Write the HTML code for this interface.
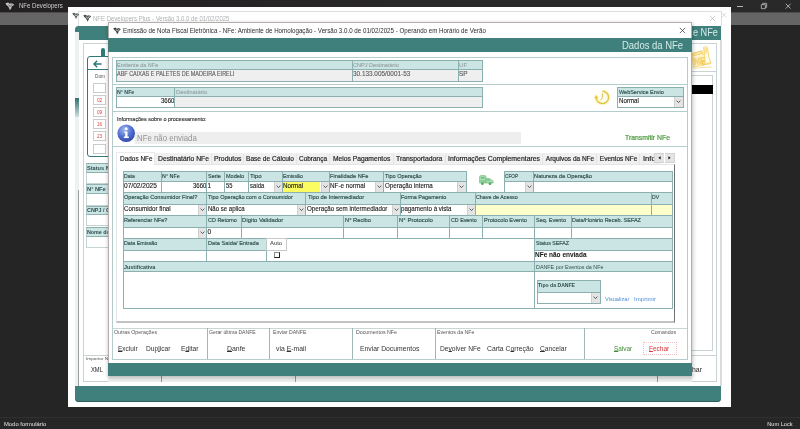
<!DOCTYPE html>
<html><head><meta charset="utf-8"><title>NFe Developers</title>
<style>
html,body{margin:0;padding:0;}
body{width:800px;height:429px;overflow:hidden;background:#252525;font-family:"Liberation Sans",sans-serif;position:relative;}
#r{position:absolute;left:0;top:0;width:800px;height:429px;overflow:hidden;will-change:transform;}
#r div{position:absolute;}
.t{position:absolute;white-space:pre;transform-origin:0 50%;display:block;}
.a{position:absolute;display:block;overflow:visible;}
u{text-decoration-thickness:0.5px;text-underline-offset:0.2px;}
</style></head><body><div id="r">
<div style="left:0.00px;top:0.00px;width:800.00px;height:12.00px;background:linear-gradient(90deg,#221f20,#2a2929 60%);"></div>
<div style="left:0.00px;top:12.00px;width:800.00px;height:12.50px;background:#656565;"></div>
<div style="left:0.00px;top:12.00px;width:800.00px;height:1.00px;background:#4c4c4c;"></div>
<div style="left:0.00px;top:416.80px;width:800.00px;height:12.20px;background:#262626;border-top:1px solid #303030;box-sizing:border-box;"></div>
<svg class="a" style="left:4.5px;top:1.5px" width="10" height="9" viewBox="0 0 10 9"><path d="M0.5 1.2 L3.2 0.6 L4.5 1.8 L6.5 1.2 L9 2.2 L8.4 3.4 L6.8 4.2 L6.2 6.4 L4.8 8.2 L4.2 6.2 L3.2 4.4 L1.4 3 Z" fill="#c2c6c6"/><path d="M3.6 2.6 L5 4.6 L7.2 2.2" fill="none" stroke="#555" stroke-width="0.9"/></svg>
<span class="t" style="left:19.20px;top:2px;font-size:6.6px;line-height:7px;height:7px;color:#cfcfcf;transform:scaleX(0.9185);">NFe Developers</span>
<div style="left:737.00px;top:5.50px;width:6.00px;height:1.00px;background:#b4b4b4;"></div>
<svg class="a" style="left:760px;top:1.8px" width="8" height="8" viewBox="0 0 9 9"><path d="M1.5 3 H6 V7.5 H1.5 Z M3 3 V1.5 H7.5 V6 H6" fill="none" stroke="#bdbdbd" stroke-width="0.9"/></svg>
<svg class="a" style="left:785px;top:3px" width="6.4" height="6.4" viewBox="0 0 8 8"><path d="M1 1 L7 7 M7 1 L1 7" fill="none" stroke="#cfcfcf" stroke-width="1"/></svg>
<span class="t" style="left:4.20px;top:421px;font-size:5.6px;line-height:6px;height:6px;color:#e6e6e6;transform:scaleX(1.0454);">Modo formulário</span>
<span class="t" style="left:767.30px;top:421px;font-size:5.6px;line-height:6px;height:6px;color:#e6e6e6;">Num Lock</span>
<div style="left:67.80px;top:7.00px;width:663.40px;height:399.70px;background:#ffffff;"></div>
<div style="left:78.00px;top:10.70px;width:644.00px;height:15.30px;background:#ffffff;border:1px solid #dcdfdf;border-bottom:none;box-sizing:border-box;"></div>
<svg class="a" style="left:72px;top:11.5px" width="8" height="8" viewBox="0 0 10 9"><path d="M0.3 1.2 L3 0.5 L4.4 1.8 L6.6 1.1 L9 2.2 L8.4 3.5 L6.8 4.3 L6.2 6.5 L4.7 8.4 L4.1 6.2 L3.1 4.4 L1.3 3 Z" fill="#5a5f5f"/><path d="M3.6 2.6 L5 4.6 L7.2 2.2" fill="none" stroke="#e8eaea" stroke-width="0.9"/></svg>
<svg class="a" style="left:83px;top:13.5px" width="9" height="8.5" viewBox="0 0 10 9"><path d="M0.3 1.2 L3 0.5 L4.4 1.8 L6.6 1.1 L9 2.2 L8.4 3.5 L6.8 4.3 L6.2 6.5 L4.7 8.4 L4.1 6.2 L3.1 4.4 L1.3 3 Z" fill="#4c5151"/><path d="M3.6 2.6 L5 4.6 L7.2 2.2" fill="none" stroke="#e8eaea" stroke-width="0.9"/></svg>
<span class="t" style="left:93.40px;top:15px;font-size:6.9px;line-height:7px;height:7px;color:#aeb2b5;transform:scaleX(0.8707);">NFE Developers Plus - Versão 3.0.0 de 01/02/2025</span>
<svg class="a" style="left:708.5px;top:14.5px" width="7" height="7" viewBox="0 0 7 7"><path d="M0.8 0.8 L6.2 6.2 M6.2 0.8 L0.8 6.2" fill="none" stroke="#b0b4b6" stroke-width="0.7"/></svg>
<svg class="a" style="left:720.5px;top:11.5px" width="6" height="6" viewBox="0 0 7 7"><path d="M0.8 0.8 L6.2 6.2 M6.2 0.8 L0.8 6.2" fill="none" stroke="#c4c8ca" stroke-width="0.7"/></svg>
<div style="left:75.00px;top:26.00px;width:646.00px;height:375.60px;border-radius:3.5px 0 3.5px 3.5px;background:linear-gradient(#f1f3f3,#f1f3f3);"></div>
<div style="left:75.00px;top:26.00px;width:646.00px;height:14.00px;background:#3f807c;border-radius:3.5px 0 0 0;"></div>
<div style="left:75.00px;top:386.00px;width:646.00px;height:15.60px;background:#3f807c;border-radius:0 0 4px 4px;box-shadow:inset 0 -1px 0 #2c5f5c;"></div>
<div style="left:79.00px;top:40.00px;width:641.20px;height:346.00px;background:#ffffff;"></div>
<div style="left:75.00px;top:32.00px;width:4.00px;height:354.00px;background:#eef1f1;"></div>
<div style="left:75.00px;top:97.50px;width:4.00px;height:19.00px;background:linear-gradient(#2f6f6b,#cfe0df);"></div>
<div style="left:77.60px;top:190.00px;width:1.00px;height:196.00px;background:#9a9e9e;"></div>
<div style="left:720.20px;top:40.00px;width:1.40px;height:346.00px;background:#d9dcdc;"></div>
<span class="t" style="left:692.60px;top:27px;font-size:10.4px;line-height:11px;height:11px;color:#d6ecea;transform:scaleX(0.8792);">e NFe</span>
<div style="left:83.00px;top:43.00px;width:633.50px;height:338.80px;background:#ffffff;border:1px solid #c9d3d3;box-sizing:border-box;"></div>
<div style="left:100.60px;top:48.00px;width:4.40px;height:10.00px;background:#2f7a75;border-radius:2px 2px 0 0;"></div>
<div style="left:87.40px;top:56.20px;width:37.60px;height:100.40px;background:#ffffff;border:1.2px solid #2f7a75;border-radius:3px;box-sizing:border-box;"></div>
<div style="left:88.40px;top:69.00px;width:23.60px;height:0.90px;background:#2f7a75;"></div>
<svg class="a" style="left:92.5px;top:59.5px" width="9.5" height="8" viewBox="0 0 9.5 8"><path d="M4.2 0.8 L1 4 L4.2 7.2 M1 4 H8.6" fill="none" stroke="#2f7a75" stroke-width="1.5"/></svg>
<span class="t" style="left:95.00px;top:74px;font-size:4.6px;line-height:5px;height:5px;color:#555;transform:scaleX(1.0296);">Dom</span>
<div style="left:92.70px;top:83.00px;width:13.10px;height:10.00px;background:#ffffff;border:1px solid #c8cccc;box-sizing:border-box;"></div>
<div style="left:92.70px;top:95.10px;width:13.10px;height:10.00px;background:#ffffff;border:1px solid #c8cccc;box-sizing:border-box;"></div>
<span class="t" style="left:96.80px;top:98px;font-size:4.6px;line-height:5px;height:5px;color:#e0443c;transform:scaleX(1.0163);">02</span>
<div style="left:92.70px;top:107.20px;width:13.10px;height:10.00px;background:#ffffff;border:1px solid #c8cccc;box-sizing:border-box;"></div>
<span class="t" style="left:96.80px;top:110px;font-size:4.6px;line-height:5px;height:5px;color:#e0443c;transform:scaleX(1.0163);">09</span>
<div style="left:92.70px;top:119.30px;width:13.10px;height:10.00px;background:#ffffff;border:1px solid #c8cccc;box-sizing:border-box;"></div>
<span class="t" style="left:96.80px;top:122px;font-size:4.6px;line-height:5px;height:5px;color:#e0443c;transform:scaleX(1.0163);">16</span>
<div style="left:92.70px;top:131.40px;width:13.10px;height:10.00px;background:#ffffff;border:1px solid #c8cccc;box-sizing:border-box;"></div>
<span class="t" style="left:96.80px;top:134px;font-size:4.6px;line-height:5px;height:5px;color:#e0443c;transform:scaleX(1.0163);">23</span>
<div style="left:92.70px;top:143.50px;width:13.10px;height:10.00px;background:#ffffff;border:1px solid #c8cccc;box-sizing:border-box;"></div>
<div style="left:86.20px;top:163.30px;width:25.80px;height:9.90px;background:#cbe5e5;border:1px solid #8fb1b1;border-right:none;box-sizing:border-box;border-left-color:#a9c6c6;"></div>
<span class="t" style="left:87.20px;top:165px;font-size:5.8px;line-height:6px;height:6px;color:#2f4f4f;font-weight:bold;transform:scaleX(0.9691);">Status N</span>
<div style="left:86.20px;top:184.20px;width:25.80px;height:10.00px;background:#cbe5e5;border:1px solid #8fb1b1;border-right:none;box-sizing:border-box;border-left-color:#a9c6c6;"></div>
<span class="t" style="left:87.20px;top:186px;font-size:5.8px;line-height:6px;height:6px;color:#2f4f4f;font-weight:bold;transform:scaleX(0.9855);">N° NFe</span>
<div style="left:86.20px;top:205.60px;width:25.80px;height:9.60px;background:#cbe5e5;border:1px solid #8fb1b1;border-right:none;box-sizing:border-box;border-left-color:#a9c6c6;"></div>
<span class="t" style="left:87.20px;top:207px;font-size:5.8px;line-height:6px;height:6px;color:#2f4f4f;font-weight:bold;transform:scaleX(0.9308);">CNPJ / C</span>
<div style="left:86.20px;top:226.50px;width:25.80px;height:10.00px;background:#cbe5e5;border:1px solid #8fb1b1;border-right:none;box-sizing:border-box;border-left-color:#a9c6c6;"></div>
<span class="t" style="left:87.20px;top:229px;font-size:5.8px;line-height:6px;height:6px;color:#2f4f4f;font-weight:bold;transform:scaleX(0.9189);">Nome do</span>
<div style="left:86.20px;top:173.20px;width:25.80px;height:11.00px;background:#ffffff;border:1px solid #c4d4d4;border-right:none;border-top:none;box-sizing:border-box;"></div>
<div style="left:86.20px;top:194.20px;width:25.80px;height:11.40px;background:#ffffff;border:1px solid #c4d4d4;border-right:none;border-top:none;box-sizing:border-box;"></div>
<div style="left:86.20px;top:215.20px;width:25.80px;height:11.30px;background:#ffffff;border:1px solid #c4d4d4;border-right:none;border-top:none;box-sizing:border-box;"></div>
<div style="left:86.20px;top:236.50px;width:25.80px;height:11.10px;background:#ffffff;border:1px solid #c4d4d4;border-right:none;border-top:none;box-sizing:border-box;"></div>
<div style="left:84.00px;top:355.00px;width:632.00px;height:0.80px;background:#c9d3d3;"></div>
<span class="t" style="left:86.40px;top:356px;font-size:4.4px;line-height:5px;height:5px;color:#555;transform:scaleX(1.0634);">Importar N</span>
<span class="t" style="left:91.30px;top:366px;font-size:6.8px;line-height:7px;height:7px;color:#222;transform:scaleX(0.8511);">XML</span>
<div style="left:108.00px;top:376.00px;width:584.00px;height:6.00px;background:#eff1f1;"></div>
<div style="left:161.20px;top:376.00px;width:0.80px;height:5.80px;background:#8a9a9a;"></div>
<div style="left:295.00px;top:376.00px;width:1.00px;height:5.80px;background:#8a9a9a;"></div>
<span class="t" style="left:691.50px;top:366px;font-size:6.8px;line-height:7px;height:7px;color:#222;transform:scaleX(1.0174);">har</span>
<div style="left:657.00px;top:376.00px;width:1.00px;height:5.80px;background:#8a9a9a;"></div>
<div style="left:688.00px;top:43.00px;width:28.50px;height:28.80px;background:#ffffff;border:1px solid #c9d3d3;box-sizing:border-box;"></div>
<svg class="a" style="left:691px;top:45px" width="22" height="24" viewBox="0 0 22 24">
<g stroke="#f5cf63" stroke-width="0.8" fill="#fdf2cc" stroke-linejoin="round">
<path d="M1 8.5 L11 5.8 L11.6 9.2 L17 11 L19.8 17.8 L19.4 18.8 L2.2 22 Z"/>
<path d="M1.2 8.6 L10.8 6 L11.2 8.4 L1.8 11 Z" fill="#fbe7a6"/>
<path d="M12.4 2.4 Q14.6 0.4 16.6 2.6 L17.6 11 L19.8 17.8 L14 19 L13.6 12 Z" fill="#fffbea"/>
<ellipse cx="14.6" cy="5.6" rx="1.1" ry="2.7" fill="#fdeeb8"/>
</g>
<text x="2.6" y="19.6" font-family="Liberation Sans" font-weight="bold" font-size="9" fill="#fdf0c4" stroke="#f3c84e" stroke-width="0.6" transform="rotate(-6 3 19)">NF</text>
<text x="10.4" y="20.2" font-family="Liberation Sans" font-weight="bold" font-size="5.4" fill="#e9bd2c">E</text>
<path d="M1.5 23.2 L20.5 22" stroke="#f3d581" stroke-width="0.8" fill="none"/>
</svg>
<div style="left:688.00px;top:75.00px;width:24.80px;height:276.30px;background:#ffffff;border:1px solid #c9d3d3;box-sizing:border-box;"></div>
<div style="left:688.00px;top:85.00px;width:24.50px;height:9.00px;background:#000000;"></div>
<div style="left:108.00px;top:22.00px;width:584.00px;height:353.70px;background:#ffffff;box-shadow:0 1px 4px 0.5px rgba(0,0,0,0.24);border:1px solid #b6adad;border-bottom:none;box-sizing:border-box;"></div>
<div style="left:108.00px;top:38.00px;width:584.00px;height:14.00px;background:#3f807c;border-left:1px solid #4d7c79;border-right:1px solid #4d7c79;box-sizing:border-box;"></div>
<div style="left:108.00px;top:363.20px;width:584.00px;height:12.50px;background:#3f807c;"></div>
<svg class="a" style="left:113px;top:26.5px" width="8.5" height="8" viewBox="0 0 10 9"><path d="M0.3 1.2 L3 0.5 L4.4 1.8 L6.6 1.1 L9 2.2 L8.4 3.5 L6.8 4.3 L6.2 6.5 L4.7 8.4 L4.1 6.2 L3.1 4.4 L1.3 3 Z" fill="#3c4141"/><path d="M3.6 2.6 L5 4.6 L7.2 2.2" fill="none" stroke="#e8eaea" stroke-width="0.9"/></svg>
<span class="t" style="left:122.60px;top:27px;font-size:6.9px;line-height:7px;height:7px;color:#2b2b2b;transform:scaleX(0.8989);">Emissão de Nota Fiscal Eletrônica - NFe: Ambiente de Homologação - Versão 3.0.0 de 01/02/2025 - Operando em Horário de Verão</span>
<svg class="a" style="left:679px;top:27px" width="7" height="7" viewBox="0 0 7 7"><path d="M0.8 0.8 L6.2 6.2 M6.2 0.8 L0.8 6.2" fill="none" stroke="#333" stroke-width="0.7"/></svg>
<span class="t" style="left:622.00px;top:40px;font-size:10.4px;line-height:11px;height:11px;color:#d4ebe9;transform:scaleX(0.9126);">Dados da NFe</span>
<div style="left:112.00px;top:57.00px;width:576.00px;height:303.00px;background:#ffffff;border:1px solid #b5cccc;box-sizing:border-box;"></div>
<div style="left:112.80px;top:83.90px;width:574.60px;height:0.80px;background:#b5cccc;"></div>
<div style="left:112.80px;top:110.90px;width:574.60px;height:0.80px;background:#b5cccc;"></div>
<div style="left:112.80px;top:145.90px;width:574.60px;height:0.80px;background:#b5cccc;"></div>
<div style="left:116.00px;top:60.00px;width:238.00px;height:10.00px;background:#cbe5e5;"></div>
<div style="left:116.00px;top:70.00px;width:238.00px;height:12.00px;background:#efefef;"></div>
<div style="left:116.00px;top:69.00px;width:238.00px;height:1.00px;background:#8cafaf;"></div>
<div style="left:116.00px;top:60.00px;width:238.00px;height:1.00px;background:#8cafaf;"></div>
<div style="left:116.00px;top:81.00px;width:238.00px;height:1.00px;background:#8cafaf;"></div>
<div style="left:116.00px;top:60.00px;width:1.00px;height:22.00px;background:#8cafaf;"></div>
<div style="left:353.00px;top:60.00px;width:1.00px;height:22.00px;background:#8cafaf;"></div>
<span class="t" style="left:117.20px;top:61px;font-size:6.1px;line-height:7px;height:7px;color:#9aa6a6;transform:scaleX(0.9023);-webkit-text-stroke:0.17px #9aa6a6;">Emitente da NFe</span>
<span class="t" style="left:117.20px;top:70px;font-size:6.5px;line-height:7px;height:7px;color:#5a5a5a;transform:scaleX(0.8420);-webkit-text-stroke:0.12px #5a5a5a;">ABF CAIXAS E PALETES DE MADEIRA EIRELI</span>
<div style="left:352.00px;top:60.00px;width:107.00px;height:10.00px;background:#cbe5e5;"></div>
<div style="left:352.00px;top:70.00px;width:107.00px;height:12.00px;background:#efefef;"></div>
<div style="left:352.00px;top:69.00px;width:107.00px;height:1.00px;background:#8cafaf;"></div>
<div style="left:352.00px;top:60.00px;width:107.00px;height:1.00px;background:#8cafaf;"></div>
<div style="left:352.00px;top:81.00px;width:107.00px;height:1.00px;background:#8cafaf;"></div>
<div style="left:352.00px;top:60.00px;width:1.00px;height:22.00px;background:#8cafaf;"></div>
<div style="left:458.00px;top:60.00px;width:1.00px;height:22.00px;background:#8cafaf;"></div>
<span class="t" style="left:353.20px;top:61px;font-size:6.1px;line-height:7px;height:7px;color:#9aa6a6;transform:scaleX(0.9128);-webkit-text-stroke:0.17px #9aa6a6;">CNPJ Destinatário</span>
<span class="t" style="left:353.20px;top:70px;font-size:6.5px;line-height:7px;height:7px;color:#5a5a5a;transform:scaleX(0.9846);-webkit-text-stroke:0.12px #5a5a5a;">30.133.005/0001-53</span>
<div style="left:458.00px;top:60.00px;width:25.00px;height:10.00px;background:#cbe5e5;"></div>
<div style="left:458.00px;top:70.00px;width:25.00px;height:12.00px;background:#efefef;"></div>
<div style="left:458.00px;top:69.00px;width:25.00px;height:1.00px;background:#8cafaf;"></div>
<div style="left:458.00px;top:60.00px;width:25.00px;height:1.00px;background:#8cafaf;"></div>
<div style="left:458.00px;top:81.00px;width:25.00px;height:1.00px;background:#8cafaf;"></div>
<div style="left:458.00px;top:60.00px;width:1.00px;height:22.00px;background:#8cafaf;"></div>
<div style="left:482.00px;top:60.00px;width:1.00px;height:22.00px;background:#8cafaf;"></div>
<span class="t" style="left:459.00px;top:61px;font-size:6.1px;line-height:7px;height:7px;color:#9aa6a6;-webkit-text-stroke:0.17px #9aa6a6;">UF</span>
<span class="t" style="left:459.00px;top:70px;font-size:6.5px;line-height:7px;height:7px;color:#5a5a5a;-webkit-text-stroke:0.12px #5a5a5a;">SP</span>
<div style="left:116.00px;top:87.00px;width:60.00px;height:10.00px;background:#cbe5e5;"></div>
<div style="left:116.00px;top:97.00px;width:60.00px;height:11.00px;background:#ffffff;"></div>
<div style="left:116.00px;top:96.00px;width:60.00px;height:1.00px;background:#8cafaf;"></div>
<div style="left:116.00px;top:87.00px;width:60.00px;height:1.00px;background:#8cafaf;"></div>
<div style="left:116.00px;top:107.00px;width:60.00px;height:1.00px;background:#8cafaf;"></div>
<div style="left:116.00px;top:87.00px;width:1.00px;height:21.00px;background:#8cafaf;"></div>
<div style="left:175.00px;top:87.00px;width:1.00px;height:21.00px;background:#8cafaf;"></div>
<span class="t" style="left:117.20px;top:88px;font-size:6.2px;line-height:7px;height:7px;color:#2f4f4f;font-weight:bold;transform:scaleX(0.8483);">N° NFe</span>
<span class="t" style="left:161.25px;top:97px;font-size:6.5px;line-height:7px;height:7px;color:#1a1a1a;transform:scaleX(0.9300);-webkit-text-stroke:0.12px #1a1a1a;">3660</span>
<div style="left:174.00px;top:87.00px;width:309.00px;height:10.00px;background:#cbe5e5;"></div>
<div style="left:174.00px;top:97.00px;width:309.00px;height:11.00px;background:#efefef;"></div>
<div style="left:174.00px;top:96.00px;width:309.00px;height:1.00px;background:#8cafaf;"></div>
<div style="left:174.00px;top:87.00px;width:309.00px;height:1.00px;background:#8cafaf;"></div>
<div style="left:174.00px;top:107.00px;width:309.00px;height:1.00px;background:#8cafaf;"></div>
<div style="left:174.00px;top:87.00px;width:1.00px;height:21.00px;background:#8cafaf;"></div>
<div style="left:482.00px;top:87.00px;width:1.00px;height:21.00px;background:#8cafaf;"></div>
<span class="t" style="left:175.80px;top:88px;font-size:6.1px;line-height:7px;height:7px;color:#9aa6a6;transform:scaleX(0.9585);-webkit-text-stroke:0.17px #9aa6a6;">Destinatário</span>
<div style="left:617.00px;top:87.00px;width:67.00px;height:10.00px;background:#cbe5e5;"></div>
<div style="left:617.00px;top:97.00px;width:67.00px;height:11.00px;background:#ffffff;"></div>
<div style="left:675.00px;top:97.00px;width:8.00px;height:10.00px;background:#e4e4e4;"></div>
<div style="left:674.00px;top:97.00px;width:1.00px;height:10.00px;background:#cfcfcf;"></div>
<svg class="a" style="left:676.40px;top:99.80px" width="5" height="3.4" viewBox="0 0 5 3.4"><path d="M0.6 0.6 L2.5 2.6 L4.4 0.6" fill="none" stroke="#444" stroke-width="0.85"/></svg>
<div style="left:617.00px;top:96.00px;width:67.00px;height:1.00px;background:#8cafaf;"></div>
<div style="left:617.00px;top:87.00px;width:67.00px;height:1.00px;background:#8cafaf;"></div>
<div style="left:617.00px;top:107.00px;width:67.00px;height:1.00px;background:#8cafaf;"></div>
<div style="left:617.00px;top:87.00px;width:1.00px;height:21.00px;background:#8cafaf;"></div>
<div style="left:683.00px;top:87.00px;width:1.00px;height:21.00px;background:#8cafaf;"></div>
<span class="t" style="left:618.60px;top:88px;font-size:6.2px;line-height:7px;height:7px;color:#2f4f4f;transform:scaleX(0.8884);-webkit-text-stroke:0.17px #2f4f4f;">WebService Envio</span>
<span class="t" style="left:618.60px;top:97px;font-size:6.5px;line-height:7px;height:7px;color:#1a1a1a;transform:scaleX(0.9500);-webkit-text-stroke:0.12px #1a1a1a;">Normal</span>
<svg class="a" style="left:594px;top:89.2px;filter:drop-shadow(0 0 1.2px rgba(240,220,80,0.9))" width="17" height="17" viewBox="0 0 17 17">
<path d="M8.4 2.2 A6.2 6.2 0 1 1 2.2 8.4" fill="none" stroke="#e2c43c" stroke-width="1.25"/>
<path d="M0.5 9.2 L4.1 9.2 L2.2 6.0 Z" fill="#e2c43c"/>
<path d="M8.4 8.6 V4.4 M8.4 8.6 L6.4 11.2" fill="none" stroke="#d4b83a" stroke-width="0.8"/>
</svg>
<span class="t" style="left:116.80px;top:116px;font-size:5.7px;line-height:6px;height:6px;color:#2a2a2a;transform:scaleX(0.9532);-webkit-text-stroke:0.12px #2a2a2a;">Informações sobre o processamento:</span>
<div style="left:135.30px;top:132.00px;width:386.20px;height:11.80px;background:#eeeeee;"></div>
<svg class="a" style="left:116.5px;top:124.0px" width="18.4" height="18.4" viewBox="0 0 18.4 18.4">
<defs><radialGradient id="ig" cx="0.4" cy="0.3" r="0.8"><stop offset="0" stop-color="#a4b8f0"/><stop offset="0.5" stop-color="#5272d2"/><stop offset="1" stop-color="#2c3e9c"/></radialGradient></defs>
<circle cx="9.2" cy="9.2" r="8.8" fill="url(#ig)"/>
<circle cx="9.2" cy="4.7" r="1.5" fill="#fff"/>
<path d="M7.2 7.4 H10.5 V12.6 H11.8 V14 H6.9 V12.6 H8.2 V8.8 H7.2 Z" fill="#fff"/>
</svg>
<span class="t" style="left:136.60px;top:132px;font-size:9.6px;line-height:11px;height:11px;color:#939393;transform:scaleX(0.8179);">NFe não enviada</span>
<span class="t" style="left:624.80px;top:134px;font-size:6.6px;line-height:7px;height:7px;color:#4a9a3a;transform:scaleX(1.0371);-webkit-text-stroke:0.2px #4a9a3a;">Transmitir NFe</span>
<div style="left:116.00px;top:164.00px;width:559.00px;height:159.00px;background:#ffffff;border:1px solid #e2e6e6;border-right:1px solid #707070;border-bottom:2px solid #c2c2c2;box-sizing:border-box;"></div>
<div style="left:155.20px;top:153.00px;width:504.80px;height:11.00px;background:#f0f0f0;"></div>
<div style="left:115.70px;top:152.30px;width:39.60px;height:12.30px;background:#ffffff;border:1px solid #e8ebeb;border-bottom:none;box-sizing:border-box;"></div>
<span class="t" style="left:119.60px;top:155px;font-size:6.5px;line-height:7px;height:7px;color:#1e1e1e;transform:scaleX(0.9916);-webkit-text-stroke:0.18px #1e1e1e;">Dados NFe</span>
<span class="t" style="left:157.60px;top:155px;font-size:6.5px;line-height:7px;height:7px;color:#1e1e1e;transform:scaleX(1.0457);-webkit-text-stroke:0.18px #1e1e1e;">Destinatário NFe</span>
<div style="left:211.00px;top:154.00px;width:1.00px;height:10.00px;background:#e5e5e5;"></div>
<span class="t" style="left:213.60px;top:155px;font-size:6.5px;line-height:7px;height:7px;color:#1e1e1e;transform:scaleX(1.0532);-webkit-text-stroke:0.18px #1e1e1e;">Produtos</span>
<div style="left:243.00px;top:154.00px;width:1.00px;height:10.00px;background:#e5e5e5;"></div>
<span class="t" style="left:246.00px;top:155px;font-size:6.5px;line-height:7px;height:7px;color:#1e1e1e;transform:scaleX(1.0140);-webkit-text-stroke:0.18px #1e1e1e;">Base de Cálculo</span>
<div style="left:296.00px;top:154.00px;width:1.00px;height:10.00px;background:#e5e5e5;"></div>
<span class="t" style="left:299.30px;top:155px;font-size:6.5px;line-height:7px;height:7px;color:#1e1e1e;transform:scaleX(0.9934);-webkit-text-stroke:0.18px #1e1e1e;">Cobrança</span>
<div style="left:329.00px;top:154.00px;width:1.00px;height:10.00px;background:#e5e5e5;"></div>
<span class="t" style="left:333.30px;top:155px;font-size:6.5px;line-height:7px;height:7px;color:#1e1e1e;transform:scaleX(1.0298);-webkit-text-stroke:0.18px #1e1e1e;">Meios Pagamentos</span>
<div style="left:393.00px;top:154.00px;width:1.00px;height:10.00px;background:#e5e5e5;"></div>
<span class="t" style="left:396.30px;top:155px;font-size:6.5px;line-height:7px;height:7px;color:#1e1e1e;transform:scaleX(1.0475);-webkit-text-stroke:0.18px #1e1e1e;">Transportadora</span>
<div style="left:445.00px;top:154.00px;width:1.00px;height:10.00px;background:#e5e5e5;"></div>
<span class="t" style="left:448.30px;top:155px;font-size:6.5px;line-height:7px;height:7px;color:#1e1e1e;transform:scaleX(1.0567);-webkit-text-stroke:0.18px #1e1e1e;">Informações Complementares</span>
<div style="left:542.00px;top:154.00px;width:1.00px;height:10.00px;background:#e5e5e5;"></div>
<span class="t" style="left:545.80px;top:155px;font-size:6.5px;line-height:7px;height:7px;color:#1e1e1e;-webkit-text-stroke:0.18px #1e1e1e;">Arquivos da NFe</span>
<div style="left:596.00px;top:154.00px;width:1.00px;height:10.00px;background:#e5e5e5;"></div>
<span class="t" style="left:599.80px;top:155px;font-size:6.5px;line-height:7px;height:7px;color:#1e1e1e;-webkit-text-stroke:0.18px #1e1e1e;">Eventos NFe</span>
<div style="left:639.00px;top:154.00px;width:1.00px;height:10.00px;background:#e5e5e5;"></div>
<span class="t" style="left:643.00px;top:155px;font-size:6.5px;line-height:7px;height:7px;color:#1e1e1e;transform:scaleX(1.1622);-webkit-text-stroke:0.18px #1e1e1e;">Info</span>
<div style="left:653.50px;top:152.60px;width:21.50px;height:10.80px;background:#e4e4e4;border:1px solid #d2d2d2;box-sizing:border-box;"></div>
<div style="left:664.30px;top:153.00px;width:0.60px;height:10.00px;background:#ffffff;"></div>
<svg class="a" style="left:657.5px;top:156.2px" width="3" height="3.6" viewBox="0 0 3 3.6"><path d="M2.6 0.2 V3.4 L0.4 1.8 Z" fill="#111"/></svg>
<svg class="a" style="left:668.2px;top:156.2px" width="3" height="3.6" viewBox="0 0 3 3.6"><path d="M0.4 0.2 V3.4 L2.6 1.8 Z" fill="#111"/></svg>
<div style="left:123.00px;top:171.00px;width:40.00px;height:11.00px;background:#cbe5e5;"></div>
<div style="left:123.00px;top:182.00px;width:40.00px;height:11.00px;background:#ffffff;"></div>
<div style="left:123.00px;top:181.00px;width:40.00px;height:1.00px;background:#8cafaf;"></div>
<div style="left:123.00px;top:171.00px;width:40.00px;height:1.00px;background:#8cafaf;"></div>
<div style="left:123.00px;top:192.00px;width:40.00px;height:1.00px;background:#8cafaf;"></div>
<div style="left:123.00px;top:171.00px;width:1.00px;height:22.00px;background:#8cafaf;"></div>
<div style="left:162.00px;top:171.00px;width:1.00px;height:22.00px;background:#8cafaf;"></div>
<span class="t" style="left:124.10px;top:172px;font-size:6.2px;line-height:7px;height:7px;color:#2f4f4f;transform:scaleX(0.8323);-webkit-text-stroke:0.17px #2f4f4f;">Data</span>
<span class="t" style="left:124.10px;top:182px;font-size:6.5px;line-height:7px;height:7px;color:#1a1a1a;transform:scaleX(1.0113);-webkit-text-stroke:0.12px #1a1a1a;">07/02/2025</span>
<div style="left:161.00px;top:171.00px;width:47.00px;height:11.00px;background:#cbe5e5;"></div>
<div style="left:161.00px;top:182.00px;width:47.00px;height:11.00px;background:#ffffff;"></div>
<div style="left:161.00px;top:181.00px;width:47.00px;height:1.00px;background:#8cafaf;"></div>
<div style="left:161.00px;top:171.00px;width:47.00px;height:1.00px;background:#8cafaf;"></div>
<div style="left:161.00px;top:192.00px;width:47.00px;height:1.00px;background:#8cafaf;"></div>
<div style="left:161.00px;top:171.00px;width:1.00px;height:22.00px;background:#8cafaf;"></div>
<div style="left:207.00px;top:171.00px;width:1.00px;height:22.00px;background:#8cafaf;"></div>
<span class="t" style="left:162.20px;top:172px;font-size:6.2px;line-height:7px;height:7px;color:#2f4f4f;font-weight:bold;transform:scaleX(0.8729);">N° NFe</span>
<span class="t" style="left:193.25px;top:182px;font-size:6.5px;line-height:7px;height:7px;color:#1a1a1a;transform:scaleX(0.9300);-webkit-text-stroke:0.12px #1a1a1a;">3660</span>
<div style="left:206.00px;top:171.00px;width:20.00px;height:11.00px;background:#cbe5e5;"></div>
<div style="left:206.00px;top:182.00px;width:20.00px;height:11.00px;background:#ffffff;"></div>
<div style="left:206.00px;top:181.00px;width:20.00px;height:1.00px;background:#8cafaf;"></div>
<div style="left:206.00px;top:171.00px;width:20.00px;height:1.00px;background:#8cafaf;"></div>
<div style="left:206.00px;top:192.00px;width:20.00px;height:1.00px;background:#8cafaf;"></div>
<div style="left:206.00px;top:171.00px;width:1.00px;height:22.00px;background:#8cafaf;"></div>
<div style="left:225.00px;top:171.00px;width:1.00px;height:22.00px;background:#8cafaf;"></div>
<span class="t" style="left:207.60px;top:172px;font-size:6.2px;line-height:7px;height:7px;color:#2f4f4f;transform:scaleX(0.8912);-webkit-text-stroke:0.17px #2f4f4f;">Serie</span>
<span class="t" style="left:207.60px;top:182px;font-size:6.5px;line-height:7px;height:7px;color:#1a1a1a;-webkit-text-stroke:0.12px #1a1a1a;">1</span>
<div style="left:224.00px;top:171.00px;width:26.00px;height:11.00px;background:#cbe5e5;"></div>
<div style="left:224.00px;top:182.00px;width:26.00px;height:11.00px;background:#ffffff;"></div>
<div style="left:224.00px;top:181.00px;width:26.00px;height:1.00px;background:#8cafaf;"></div>
<div style="left:224.00px;top:171.00px;width:26.00px;height:1.00px;background:#8cafaf;"></div>
<div style="left:224.00px;top:192.00px;width:26.00px;height:1.00px;background:#8cafaf;"></div>
<div style="left:224.00px;top:171.00px;width:1.00px;height:22.00px;background:#8cafaf;"></div>
<div style="left:249.00px;top:171.00px;width:1.00px;height:22.00px;background:#8cafaf;"></div>
<span class="t" style="left:225.60px;top:172px;font-size:6.2px;line-height:7px;height:7px;color:#2f4f4f;transform:scaleX(0.8950);-webkit-text-stroke:0.17px #2f4f4f;">Modelo</span>
<span class="t" style="left:225.60px;top:182px;font-size:6.5px;line-height:7px;height:7px;color:#1a1a1a;transform:scaleX(0.8852);-webkit-text-stroke:0.12px #1a1a1a;">55</span>
<div style="left:248.00px;top:171.00px;width:36.00px;height:11.00px;background:#cbe5e5;"></div>
<div style="left:248.00px;top:182.00px;width:36.00px;height:11.00px;background:#ffffff;"></div>
<div style="left:275.00px;top:182.00px;width:8.00px;height:10.00px;background:#e4e4e4;"></div>
<div style="left:274.00px;top:182.00px;width:1.00px;height:10.00px;background:#cfcfcf;"></div>
<svg class="a" style="left:276.40px;top:184.80px" width="5" height="3.4" viewBox="0 0 5 3.4"><path d="M0.6 0.6 L2.5 2.6 L4.4 0.6" fill="none" stroke="#444" stroke-width="0.85"/></svg>
<div style="left:248.00px;top:181.00px;width:36.00px;height:1.00px;background:#8cafaf;"></div>
<div style="left:248.00px;top:171.00px;width:36.00px;height:1.00px;background:#8cafaf;"></div>
<div style="left:248.00px;top:192.00px;width:36.00px;height:1.00px;background:#8cafaf;"></div>
<div style="left:248.00px;top:171.00px;width:1.00px;height:22.00px;background:#8cafaf;"></div>
<div style="left:283.00px;top:171.00px;width:1.00px;height:22.00px;background:#8cafaf;"></div>
<span class="t" style="left:249.50px;top:172px;font-size:6.2px;line-height:7px;height:7px;color:#2f4f4f;transform:scaleX(0.9889);-webkit-text-stroke:0.17px #2f4f4f;">Tipo</span>
<span class="t" style="left:249.50px;top:182px;font-size:6.5px;line-height:7px;height:7px;color:#1a1a1a;transform:scaleX(0.8930);-webkit-text-stroke:0.12px #1a1a1a;">saída</span>
<div style="left:282.00px;top:171.00px;width:49.00px;height:11.00px;background:#cbe5e5;"></div>
<div style="left:282.00px;top:182.00px;width:49.00px;height:11.00px;background:#ffffff;"></div>
<div style="left:322.00px;top:182.00px;width:8.00px;height:10.00px;background:#e4e4e4;"></div>
<div style="left:321.00px;top:182.00px;width:1.00px;height:10.00px;background:#cfcfcf;"></div>
<svg class="a" style="left:323.40px;top:184.80px" width="5" height="3.4" viewBox="0 0 5 3.4"><path d="M0.6 0.6 L2.5 2.6 L4.4 0.6" fill="none" stroke="#444" stroke-width="0.85"/></svg>
<div style="left:282.00px;top:181.00px;width:49.00px;height:1.00px;background:#8cafaf;"></div>
<div style="left:282.00px;top:171.00px;width:49.00px;height:1.00px;background:#8cafaf;"></div>
<div style="left:282.00px;top:192.00px;width:49.00px;height:1.00px;background:#8cafaf;"></div>
<div style="left:282.00px;top:171.00px;width:1.00px;height:22.00px;background:#8cafaf;"></div>
<div style="left:330.00px;top:171.00px;width:1.00px;height:22.00px;background:#8cafaf;"></div>
<span class="t" style="left:283.20px;top:172px;font-size:6.2px;line-height:7px;height:7px;color:#2f4f4f;transform:scaleX(0.8328);-webkit-text-stroke:0.17px #2f4f4f;">Emissão</span>
<span class="t" style="left:283.20px;top:182px;font-size:6.5px;line-height:7px;height:7px;color:#1a1a1a;transform:scaleX(0.9691);-webkit-text-stroke:0.12px #1a1a1a;">Normal</span>
<div style="left:283.00px;top:182.00px;width:37.40px;height:10.00px;background:#fbfb62;"></div>
<span class="t" style="left:283.30px;top:182px;font-size:6.5px;line-height:7px;height:7px;color:#1a1a1a;transform:scaleX(0.9643);-webkit-text-stroke:0.12px #1a1a1a;">Normal</span>
<div style="left:329.00px;top:171.00px;width:56.00px;height:11.00px;background:#cbe5e5;"></div>
<div style="left:329.00px;top:182.00px;width:56.00px;height:11.00px;background:#ffffff;"></div>
<div style="left:376.00px;top:182.00px;width:8.00px;height:10.00px;background:#e4e4e4;"></div>
<div style="left:375.00px;top:182.00px;width:1.00px;height:10.00px;background:#cfcfcf;"></div>
<svg class="a" style="left:377.40px;top:184.80px" width="5" height="3.4" viewBox="0 0 5 3.4"><path d="M0.6 0.6 L2.5 2.6 L4.4 0.6" fill="none" stroke="#444" stroke-width="0.85"/></svg>
<div style="left:329.00px;top:181.00px;width:56.00px;height:1.00px;background:#8cafaf;"></div>
<div style="left:329.00px;top:171.00px;width:56.00px;height:1.00px;background:#8cafaf;"></div>
<div style="left:329.00px;top:192.00px;width:56.00px;height:1.00px;background:#8cafaf;"></div>
<div style="left:329.00px;top:171.00px;width:1.00px;height:22.00px;background:#8cafaf;"></div>
<div style="left:384.00px;top:171.00px;width:1.00px;height:22.00px;background:#8cafaf;"></div>
<span class="t" style="left:330.40px;top:172px;font-size:6.2px;line-height:7px;height:7px;color:#2f4f4f;transform:scaleX(0.9133);-webkit-text-stroke:0.17px #2f4f4f;">Finalidade NFe</span>
<span class="t" style="left:330.40px;top:182px;font-size:6.5px;line-height:7px;height:7px;color:#1a1a1a;transform:scaleX(0.9718);-webkit-text-stroke:0.12px #1a1a1a;">NF-e normal</span>
<div style="left:383.00px;top:171.00px;width:84.00px;height:11.00px;background:#cbe5e5;"></div>
<div style="left:383.00px;top:182.00px;width:84.00px;height:11.00px;background:#ffffff;"></div>
<div style="left:458.00px;top:182.00px;width:8.00px;height:10.00px;background:#e4e4e4;"></div>
<div style="left:457.00px;top:182.00px;width:1.00px;height:10.00px;background:#cfcfcf;"></div>
<svg class="a" style="left:459.40px;top:184.80px" width="5" height="3.4" viewBox="0 0 5 3.4"><path d="M0.6 0.6 L2.5 2.6 L4.4 0.6" fill="none" stroke="#444" stroke-width="0.85"/></svg>
<div style="left:383.00px;top:181.00px;width:84.00px;height:1.00px;background:#8cafaf;"></div>
<div style="left:383.00px;top:171.00px;width:84.00px;height:1.00px;background:#8cafaf;"></div>
<div style="left:383.00px;top:192.00px;width:84.00px;height:1.00px;background:#8cafaf;"></div>
<div style="left:383.00px;top:171.00px;width:1.00px;height:22.00px;background:#8cafaf;"></div>
<div style="left:466.00px;top:171.00px;width:1.00px;height:22.00px;background:#8cafaf;"></div>
<span class="t" style="left:384.70px;top:172px;font-size:6.2px;line-height:7px;height:7px;color:#2f4f4f;transform:scaleX(0.9023);-webkit-text-stroke:0.17px #2f4f4f;">Tipo Operação</span>
<span class="t" style="left:384.70px;top:182px;font-size:6.5px;line-height:7px;height:7px;color:#1a1a1a;transform:scaleX(0.9517);-webkit-text-stroke:0.12px #1a1a1a;">Operação interna</span>
<div style="left:504.00px;top:171.00px;width:31.00px;height:11.00px;background:#cbe5e5;"></div>
<div style="left:504.00px;top:182.00px;width:31.00px;height:11.00px;background:#ffffff;"></div>
<div style="left:526.00px;top:182.00px;width:8.00px;height:10.00px;background:#e4e4e4;"></div>
<div style="left:525.00px;top:182.00px;width:1.00px;height:10.00px;background:#cfcfcf;"></div>
<svg class="a" style="left:527.40px;top:184.80px" width="5" height="3.4" viewBox="0 0 5 3.4"><path d="M0.6 0.6 L2.5 2.6 L4.4 0.6" fill="none" stroke="#444" stroke-width="0.85"/></svg>
<div style="left:504.00px;top:181.00px;width:31.00px;height:1.00px;background:#8cafaf;"></div>
<div style="left:504.00px;top:171.00px;width:31.00px;height:1.00px;background:#8cafaf;"></div>
<div style="left:504.00px;top:192.00px;width:31.00px;height:1.00px;background:#8cafaf;"></div>
<div style="left:504.00px;top:171.00px;width:1.00px;height:22.00px;background:#8cafaf;"></div>
<div style="left:534.00px;top:171.00px;width:1.00px;height:22.00px;background:#8cafaf;"></div>
<span class="t" style="left:505.40px;top:172px;font-size:6.2px;line-height:7px;height:7px;color:#2f4f4f;transform:scaleX(0.7606);-webkit-text-stroke:0.17px #2f4f4f;">CFOP</span>
<div style="left:533.00px;top:171.00px;width:140.00px;height:11.00px;background:#cbe5e5;"></div>
<div style="left:533.00px;top:182.00px;width:140.00px;height:11.00px;background:#ffffff;"></div>
<div style="left:533.00px;top:181.00px;width:140.00px;height:1.00px;background:#8cafaf;"></div>
<div style="left:533.00px;top:171.00px;width:140.00px;height:1.00px;background:#8cafaf;"></div>
<div style="left:533.00px;top:192.00px;width:140.00px;height:1.00px;background:#8cafaf;"></div>
<div style="left:533.00px;top:171.00px;width:1.00px;height:22.00px;background:#8cafaf;"></div>
<div style="left:672.00px;top:171.00px;width:1.00px;height:22.00px;background:#8cafaf;"></div>
<span class="t" style="left:534.40px;top:172px;font-size:6.2px;line-height:7px;height:7px;color:#2f4f4f;transform:scaleX(0.9262);-webkit-text-stroke:0.17px #2f4f4f;">Natureza da Operação</span>
<svg class="a" style="left:479px;top:174.9px" width="15" height="10.6" viewBox="0 0 15 10.6">
<g fill="#a9deb3" stroke="#62b070" stroke-width="0.6">
<path d="M0.6 2.2 Q0.6 0.6 2 0.6 H5.6 Q7 0.6 7 2.2 V8 H0.6 Z"/>
<path d="M7 3.4 H10.2 L13.4 5.6 Q14.2 6 14.2 6.8 V8 H7 Z"/>
</g>
<circle cx="3.4" cy="8.7" r="1.4" fill="#5aa868"/>
<circle cx="11" cy="8.7" r="1.4" fill="#5aa868"/>
<path d="M2 2 H5.6 V3.6 H2 Z M8 4.3 H10 L11.6 5.6 H8 Z M1.6 5.6 H6 V6.4 H1.6 Z" fill="#6cba7a"/>
</svg>
<div style="left:123.00px;top:192.00px;width:85.00px;height:13.00px;background:#cbe5e5;"></div>
<div style="left:123.00px;top:205.00px;width:85.00px;height:11.00px;background:#ffffff;"></div>
<div style="left:199.00px;top:205.00px;width:8.00px;height:10.00px;background:#e4e4e4;"></div>
<div style="left:198.00px;top:205.00px;width:1.00px;height:10.00px;background:#cfcfcf;"></div>
<svg class="a" style="left:200.40px;top:207.80px" width="5" height="3.4" viewBox="0 0 5 3.4"><path d="M0.6 0.6 L2.5 2.6 L4.4 0.6" fill="none" stroke="#444" stroke-width="0.85"/></svg>
<div style="left:123.00px;top:204.00px;width:85.00px;height:1.00px;background:#8cafaf;"></div>
<div style="left:123.00px;top:192.00px;width:85.00px;height:1.00px;background:#8cafaf;"></div>
<div style="left:123.00px;top:215.00px;width:85.00px;height:1.00px;background:#8cafaf;"></div>
<div style="left:123.00px;top:192.00px;width:1.00px;height:24.00px;background:#8cafaf;"></div>
<div style="left:207.00px;top:192.00px;width:1.00px;height:24.00px;background:#8cafaf;"></div>
<span class="t" style="left:124.10px;top:193px;font-size:6.2px;line-height:7px;height:7px;color:#2f4f4f;transform:scaleX(0.9063);-webkit-text-stroke:0.17px #2f4f4f;">Operação Consumidor Final?</span>
<span class="t" style="left:124.10px;top:205px;font-size:6.5px;line-height:7px;height:7px;color:#1a1a1a;transform:scaleX(0.9575);-webkit-text-stroke:0.12px #1a1a1a;">Consumidor final</span>
<div style="left:206.00px;top:192.00px;width:101.00px;height:13.00px;background:#cbe5e5;"></div>
<div style="left:206.00px;top:205.00px;width:101.00px;height:11.00px;background:#ffffff;"></div>
<div style="left:298.00px;top:205.00px;width:8.00px;height:10.00px;background:#e4e4e4;"></div>
<div style="left:297.00px;top:205.00px;width:1.00px;height:10.00px;background:#cfcfcf;"></div>
<svg class="a" style="left:299.40px;top:207.80px" width="5" height="3.4" viewBox="0 0 5 3.4"><path d="M0.6 0.6 L2.5 2.6 L4.4 0.6" fill="none" stroke="#444" stroke-width="0.85"/></svg>
<div style="left:206.00px;top:204.00px;width:101.00px;height:1.00px;background:#8cafaf;"></div>
<div style="left:206.00px;top:192.00px;width:101.00px;height:1.00px;background:#8cafaf;"></div>
<div style="left:206.00px;top:215.00px;width:101.00px;height:1.00px;background:#8cafaf;"></div>
<div style="left:206.00px;top:192.00px;width:1.00px;height:24.00px;background:#8cafaf;"></div>
<div style="left:306.00px;top:192.00px;width:1.00px;height:24.00px;background:#8cafaf;"></div>
<span class="t" style="left:207.60px;top:193px;font-size:6.2px;line-height:7px;height:7px;color:#2f4f4f;transform:scaleX(0.8981);-webkit-text-stroke:0.17px #2f4f4f;">Tipo Operação com o Consumidor</span>
<span class="t" style="left:207.60px;top:205px;font-size:6.5px;line-height:7px;height:7px;color:#1a1a1a;transform:scaleX(0.9318);-webkit-text-stroke:0.12px #1a1a1a;">Não se aplica</span>
<div style="left:305.00px;top:192.00px;width:97.00px;height:13.00px;background:#cbe5e5;"></div>
<div style="left:305.00px;top:205.00px;width:97.00px;height:11.00px;background:#ffffff;"></div>
<div style="left:393.00px;top:205.00px;width:8.00px;height:10.00px;background:#e4e4e4;"></div>
<div style="left:392.00px;top:205.00px;width:1.00px;height:10.00px;background:#cfcfcf;"></div>
<svg class="a" style="left:394.40px;top:207.80px" width="5" height="3.4" viewBox="0 0 5 3.4"><path d="M0.6 0.6 L2.5 2.6 L4.4 0.6" fill="none" stroke="#444" stroke-width="0.85"/></svg>
<div style="left:305.00px;top:204.00px;width:97.00px;height:1.00px;background:#8cafaf;"></div>
<div style="left:305.00px;top:192.00px;width:97.00px;height:1.00px;background:#8cafaf;"></div>
<div style="left:305.00px;top:215.00px;width:97.00px;height:1.00px;background:#8cafaf;"></div>
<div style="left:305.00px;top:192.00px;width:1.00px;height:24.00px;background:#8cafaf;"></div>
<div style="left:401.00px;top:192.00px;width:1.00px;height:24.00px;background:#8cafaf;"></div>
<span class="t" style="left:308.20px;top:193px;font-size:6.2px;line-height:7px;height:7px;color:#2f4f4f;transform:scaleX(0.9317);-webkit-text-stroke:0.17px #2f4f4f;">Tipo de Intermediador</span>
<span class="t" style="left:306.60px;top:205px;font-size:6.5px;line-height:7px;height:7px;color:#1a1a1a;transform:scaleX(0.9551);-webkit-text-stroke:0.12px #1a1a1a;">Operação sem intermediador</span>
<div style="left:400.00px;top:192.00px;width:77.00px;height:13.00px;background:#cbe5e5;"></div>
<div style="left:400.00px;top:205.00px;width:77.00px;height:11.00px;background:#ffffff;"></div>
<div style="left:468.00px;top:205.00px;width:8.00px;height:10.00px;background:#e4e4e4;"></div>
<div style="left:467.00px;top:205.00px;width:1.00px;height:10.00px;background:#cfcfcf;"></div>
<svg class="a" style="left:469.40px;top:207.80px" width="5" height="3.4" viewBox="0 0 5 3.4"><path d="M0.6 0.6 L2.5 2.6 L4.4 0.6" fill="none" stroke="#444" stroke-width="0.85"/></svg>
<div style="left:400.00px;top:204.00px;width:77.00px;height:1.00px;background:#8cafaf;"></div>
<div style="left:400.00px;top:192.00px;width:77.00px;height:1.00px;background:#8cafaf;"></div>
<div style="left:400.00px;top:215.00px;width:77.00px;height:1.00px;background:#8cafaf;"></div>
<div style="left:400.00px;top:192.00px;width:1.00px;height:24.00px;background:#8cafaf;"></div>
<div style="left:476.00px;top:192.00px;width:1.00px;height:24.00px;background:#8cafaf;"></div>
<span class="t" style="left:401.30px;top:193px;font-size:6.2px;line-height:7px;height:7px;color:#2f4f4f;transform:scaleX(0.8861);-webkit-text-stroke:0.17px #2f4f4f;">Forma Pagamento</span>
<span class="t" style="left:401.30px;top:205px;font-size:6.5px;line-height:7px;height:7px;color:#1a1a1a;transform:scaleX(0.9507);-webkit-text-stroke:0.12px #1a1a1a;">pagamento à vista</span>
<div style="left:475.00px;top:192.00px;width:178.00px;height:13.00px;background:#cbe5e5;"></div>
<div style="left:475.00px;top:205.00px;width:178.00px;height:11.00px;background:#ffffcc;"></div>
<div style="left:475.00px;top:204.00px;width:178.00px;height:1.00px;background:#8cafaf;"></div>
<div style="left:475.00px;top:192.00px;width:178.00px;height:1.00px;background:#8cafaf;"></div>
<div style="left:475.00px;top:215.00px;width:178.00px;height:1.00px;background:#8cafaf;"></div>
<div style="left:475.00px;top:192.00px;width:1.00px;height:24.00px;background:#8cafaf;"></div>
<div style="left:652.00px;top:192.00px;width:1.00px;height:24.00px;background:#8cafaf;"></div>
<span class="t" style="left:476.20px;top:193px;font-size:6.2px;line-height:7px;height:7px;color:#2f4f4f;transform:scaleX(0.8663);-webkit-text-stroke:0.17px #2f4f4f;">Chave de Acesso</span>
<div style="left:651.00px;top:192.00px;width:22.00px;height:13.00px;background:#cbe5e5;"></div>
<div style="left:651.00px;top:205.00px;width:22.00px;height:11.00px;background:#ffffcc;"></div>
<div style="left:651.00px;top:204.00px;width:22.00px;height:1.00px;background:#8cafaf;"></div>
<div style="left:651.00px;top:192.00px;width:22.00px;height:1.00px;background:#8cafaf;"></div>
<div style="left:651.00px;top:215.00px;width:22.00px;height:1.00px;background:#8cafaf;"></div>
<div style="left:651.00px;top:192.00px;width:1.00px;height:24.00px;background:#8cafaf;"></div>
<div style="left:672.00px;top:192.00px;width:1.00px;height:24.00px;background:#8cafaf;"></div>
<span class="t" style="left:652.40px;top:193px;font-size:6.2px;line-height:7px;height:7px;color:#2f4f4f;transform:scaleX(0.8243);-webkit-text-stroke:0.17px #2f4f4f;">DV</span>
<div style="left:123.00px;top:215.00px;width:85.00px;height:13.00px;background:#cbe5e5;"></div>
<div style="left:123.00px;top:228.00px;width:85.00px;height:11.00px;background:#ffffff;"></div>
<div style="left:199.00px;top:228.00px;width:8.00px;height:10.00px;background:#e4e4e4;"></div>
<div style="left:198.00px;top:228.00px;width:1.00px;height:10.00px;background:#cfcfcf;"></div>
<svg class="a" style="left:200.40px;top:230.80px" width="5" height="3.4" viewBox="0 0 5 3.4"><path d="M0.6 0.6 L2.5 2.6 L4.4 0.6" fill="none" stroke="#444" stroke-width="0.85"/></svg>
<div style="left:123.00px;top:227.00px;width:85.00px;height:1.00px;background:#8cafaf;"></div>
<div style="left:123.00px;top:215.00px;width:85.00px;height:1.00px;background:#8cafaf;"></div>
<div style="left:123.00px;top:238.00px;width:85.00px;height:1.00px;background:#8cafaf;"></div>
<div style="left:123.00px;top:215.00px;width:1.00px;height:24.00px;background:#8cafaf;"></div>
<div style="left:207.00px;top:215.00px;width:1.00px;height:24.00px;background:#8cafaf;"></div>
<span class="t" style="left:124.10px;top:216px;font-size:6.2px;line-height:7px;height:7px;color:#2f4f4f;transform:scaleX(0.8869);-webkit-text-stroke:0.17px #2f4f4f;">Referenciar NFe?</span>
<div style="left:206.00px;top:215.00px;width:37.00px;height:13.00px;background:#cbe5e5;"></div>
<div style="left:206.00px;top:228.00px;width:37.00px;height:11.00px;background:#ffffff;"></div>
<div style="left:206.00px;top:227.00px;width:37.00px;height:1.00px;background:#8cafaf;"></div>
<div style="left:206.00px;top:215.00px;width:37.00px;height:1.00px;background:#8cafaf;"></div>
<div style="left:206.00px;top:238.00px;width:37.00px;height:1.00px;background:#8cafaf;"></div>
<div style="left:206.00px;top:215.00px;width:1.00px;height:24.00px;background:#8cafaf;"></div>
<div style="left:242.00px;top:215.00px;width:1.00px;height:24.00px;background:#8cafaf;"></div>
<span class="t" style="left:207.60px;top:216px;font-size:6.2px;line-height:7px;height:7px;color:#2f4f4f;transform:scaleX(0.8828);-webkit-text-stroke:0.17px #2f4f4f;">CD Retorno</span>
<span class="t" style="left:207.60px;top:228px;font-size:6.5px;line-height:7px;height:7px;color:#1a1a1a;-webkit-text-stroke:0.12px #1a1a1a;">0</span>
<div style="left:241.00px;top:215.00px;width:104.00px;height:13.00px;background:#cbe5e5;"></div>
<div style="left:241.00px;top:228.00px;width:104.00px;height:11.00px;background:#ffffff;"></div>
<div style="left:241.00px;top:227.00px;width:104.00px;height:1.00px;background:#8cafaf;"></div>
<div style="left:241.00px;top:215.00px;width:104.00px;height:1.00px;background:#8cafaf;"></div>
<div style="left:241.00px;top:238.00px;width:104.00px;height:1.00px;background:#8cafaf;"></div>
<div style="left:241.00px;top:215.00px;width:1.00px;height:24.00px;background:#8cafaf;"></div>
<div style="left:344.00px;top:215.00px;width:1.00px;height:24.00px;background:#8cafaf;"></div>
<span class="t" style="left:242.30px;top:216px;font-size:6.2px;line-height:7px;height:7px;color:#2f4f4f;transform:scaleX(0.9437);-webkit-text-stroke:0.17px #2f4f4f;">Dígito Validador</span>
<div style="left:343.00px;top:215.00px;width:56.00px;height:13.00px;background:#cbe5e5;"></div>
<div style="left:343.00px;top:228.00px;width:56.00px;height:11.00px;background:#ffffff;"></div>
<div style="left:343.00px;top:227.00px;width:56.00px;height:1.00px;background:#8cafaf;"></div>
<div style="left:343.00px;top:215.00px;width:56.00px;height:1.00px;background:#8cafaf;"></div>
<div style="left:343.00px;top:238.00px;width:56.00px;height:1.00px;background:#8cafaf;"></div>
<div style="left:343.00px;top:215.00px;width:1.00px;height:24.00px;background:#8cafaf;"></div>
<div style="left:398.00px;top:215.00px;width:1.00px;height:24.00px;background:#8cafaf;"></div>
<span class="t" style="left:344.50px;top:216px;font-size:6.2px;line-height:7px;height:7px;color:#2f4f4f;transform:scaleX(0.9293);-webkit-text-stroke:0.17px #2f4f4f;">N° Recibo</span>
<div style="left:397.00px;top:215.00px;width:54.00px;height:13.00px;background:#cbe5e5;"></div>
<div style="left:397.00px;top:228.00px;width:54.00px;height:11.00px;background:#ffffff;"></div>
<div style="left:397.00px;top:227.00px;width:54.00px;height:1.00px;background:#8cafaf;"></div>
<div style="left:397.00px;top:215.00px;width:54.00px;height:1.00px;background:#8cafaf;"></div>
<div style="left:397.00px;top:238.00px;width:54.00px;height:1.00px;background:#8cafaf;"></div>
<div style="left:397.00px;top:215.00px;width:1.00px;height:24.00px;background:#8cafaf;"></div>
<div style="left:450.00px;top:215.00px;width:1.00px;height:24.00px;background:#8cafaf;"></div>
<span class="t" style="left:398.60px;top:216px;font-size:6.2px;line-height:7px;height:7px;color:#2f4f4f;transform:scaleX(0.9721);-webkit-text-stroke:0.17px #2f4f4f;">N° Protocolo</span>
<div style="left:449.00px;top:215.00px;width:35.00px;height:13.00px;background:#cbe5e5;"></div>
<div style="left:449.00px;top:228.00px;width:35.00px;height:11.00px;background:#ffffff;"></div>
<div style="left:449.00px;top:227.00px;width:35.00px;height:1.00px;background:#8cafaf;"></div>
<div style="left:449.00px;top:215.00px;width:35.00px;height:1.00px;background:#8cafaf;"></div>
<div style="left:449.00px;top:238.00px;width:35.00px;height:1.00px;background:#8cafaf;"></div>
<div style="left:449.00px;top:215.00px;width:1.00px;height:24.00px;background:#8cafaf;"></div>
<div style="left:483.00px;top:215.00px;width:1.00px;height:24.00px;background:#8cafaf;"></div>
<span class="t" style="left:450.80px;top:216px;font-size:6.2px;line-height:7px;height:7px;color:#2f4f4f;transform:scaleX(0.8572);-webkit-text-stroke:0.17px #2f4f4f;">CD Evento</span>
<div style="left:482.00px;top:215.00px;width:54.00px;height:13.00px;background:#cbe5e5;"></div>
<div style="left:482.00px;top:228.00px;width:54.00px;height:11.00px;background:#ffffff;"></div>
<div style="left:482.00px;top:227.00px;width:54.00px;height:1.00px;background:#8cafaf;"></div>
<div style="left:482.00px;top:215.00px;width:54.00px;height:1.00px;background:#8cafaf;"></div>
<div style="left:482.00px;top:238.00px;width:54.00px;height:1.00px;background:#8cafaf;"></div>
<div style="left:482.00px;top:215.00px;width:1.00px;height:24.00px;background:#8cafaf;"></div>
<div style="left:535.00px;top:215.00px;width:1.00px;height:24.00px;background:#8cafaf;"></div>
<span class="t" style="left:483.50px;top:216px;font-size:6.2px;line-height:7px;height:7px;color:#2f4f4f;transform:scaleX(0.9107);-webkit-text-stroke:0.17px #2f4f4f;">Protocolo Evento</span>
<div style="left:534.00px;top:215.00px;width:39.00px;height:13.00px;background:#cbe5e5;"></div>
<div style="left:534.00px;top:228.00px;width:39.00px;height:11.00px;background:#ffffff;"></div>
<div style="left:534.00px;top:227.00px;width:39.00px;height:1.00px;background:#8cafaf;"></div>
<div style="left:534.00px;top:215.00px;width:39.00px;height:1.00px;background:#8cafaf;"></div>
<div style="left:534.00px;top:238.00px;width:39.00px;height:1.00px;background:#8cafaf;"></div>
<div style="left:534.00px;top:215.00px;width:1.00px;height:24.00px;background:#8cafaf;"></div>
<div style="left:572.00px;top:215.00px;width:1.00px;height:24.00px;background:#8cafaf;"></div>
<span class="t" style="left:535.50px;top:216px;font-size:6.2px;line-height:7px;height:7px;color:#2f4f4f;transform:scaleX(0.8881);-webkit-text-stroke:0.17px #2f4f4f;">Seq. Evento</span>
<div style="left:571.00px;top:215.00px;width:102.00px;height:13.00px;background:#cbe5e5;"></div>
<div style="left:571.00px;top:228.00px;width:102.00px;height:11.00px;background:#ffffff;"></div>
<div style="left:571.00px;top:227.00px;width:102.00px;height:1.00px;background:#8cafaf;"></div>
<div style="left:571.00px;top:215.00px;width:102.00px;height:1.00px;background:#8cafaf;"></div>
<div style="left:571.00px;top:238.00px;width:102.00px;height:1.00px;background:#8cafaf;"></div>
<div style="left:571.00px;top:215.00px;width:1.00px;height:24.00px;background:#8cafaf;"></div>
<div style="left:672.00px;top:215.00px;width:1.00px;height:24.00px;background:#8cafaf;"></div>
<span class="t" style="left:572.40px;top:216px;font-size:6.2px;line-height:7px;height:7px;color:#2f4f4f;transform:scaleX(0.8873);-webkit-text-stroke:0.17px #2f4f4f;">Data/Horário Receb. SEFAZ</span>
<div style="left:123.00px;top:238.00px;width:85.00px;height:13.00px;background:#cbe5e5;"></div>
<div style="left:123.00px;top:251.00px;width:85.00px;height:11.00px;background:#ffffff;"></div>
<div style="left:123.00px;top:250.00px;width:85.00px;height:1.00px;background:#8cafaf;"></div>
<div style="left:123.00px;top:238.00px;width:85.00px;height:1.00px;background:#8cafaf;"></div>
<div style="left:123.00px;top:261.00px;width:85.00px;height:1.00px;background:#8cafaf;"></div>
<div style="left:123.00px;top:238.00px;width:1.00px;height:24.00px;background:#8cafaf;"></div>
<div style="left:207.00px;top:238.00px;width:1.00px;height:24.00px;background:#8cafaf;"></div>
<span class="t" style="left:124.10px;top:239px;font-size:6.2px;line-height:7px;height:7px;color:#2f4f4f;transform:scaleX(0.8654);-webkit-text-stroke:0.17px #2f4f4f;">Data Emissão</span>
<div style="left:206.00px;top:238.00px;width:61.00px;height:13.00px;background:#cbe5e5;"></div>
<div style="left:206.00px;top:251.00px;width:61.00px;height:11.00px;background:#ffffff;"></div>
<div style="left:206.00px;top:250.00px;width:61.00px;height:1.00px;background:#8cafaf;"></div>
<div style="left:206.00px;top:238.00px;width:61.00px;height:1.00px;background:#8cafaf;"></div>
<div style="left:206.00px;top:261.00px;width:61.00px;height:1.00px;background:#8cafaf;"></div>
<div style="left:206.00px;top:238.00px;width:1.00px;height:24.00px;background:#8cafaf;"></div>
<div style="left:266.00px;top:238.00px;width:1.00px;height:24.00px;background:#8cafaf;"></div>
<span class="t" style="left:207.60px;top:239px;font-size:6.2px;line-height:7px;height:7px;color:#2f4f4f;transform:scaleX(0.9060);-webkit-text-stroke:0.17px #2f4f4f;">Data Saída/ Entrada</span>
<div style="left:266.00px;top:238.00px;width:21.00px;height:13.00px;background:#ffffff;border:1px solid #c6caca;box-sizing:border-box;"></div>
<span class="t" style="left:270.00px;top:240px;font-size:5.6px;line-height:6px;height:6px;color:#333;transform:scaleX(1.0416);">Auto</span>
<div style="left:273.50px;top:252.00px;width:6.50px;height:6.00px;background:#ffffff;border:1px solid #222;border-top-color:#8a8a8a;border-left-color:#8a8a8a;box-sizing:border-box;"></div>
<div style="left:534.00px;top:238.00px;width:139.00px;height:13.00px;background:#cbe5e5;"></div>
<div style="left:534.00px;top:251.00px;width:139.00px;height:11.00px;background:#ffffff;"></div>
<div style="left:534.00px;top:250.00px;width:139.00px;height:1.00px;background:#8cafaf;"></div>
<div style="left:534.00px;top:238.00px;width:139.00px;height:1.00px;background:#8cafaf;"></div>
<div style="left:534.00px;top:261.00px;width:139.00px;height:1.00px;background:#8cafaf;"></div>
<div style="left:534.00px;top:238.00px;width:1.00px;height:24.00px;background:#8cafaf;"></div>
<div style="left:672.00px;top:238.00px;width:1.00px;height:24.00px;background:#8cafaf;"></div>
<span class="t" style="left:535.50px;top:239px;font-size:6.2px;line-height:7px;height:7px;color:#2f4f4f;transform:scaleX(0.8475);-webkit-text-stroke:0.17px #2f4f4f;">Status SEFAZ</span>
<span class="t" style="left:535.40px;top:250px;font-size:7.4px;line-height:9px;height:9px;color:#111;font-weight:bold;transform:scaleX(0.8774);">NFe não enviada</span>
<div style="left:123.00px;top:261.00px;width:412.00px;height:48.00px;background:#ffffff;"></div>
<div style="left:123.00px;top:261.00px;width:550.00px;height:11.00px;background:#cbe5e5;"></div>
<div style="left:535.00px;top:272.00px;width:138.00px;height:37.00px;background:#ffffff;"></div>
<div style="left:123.00px;top:261.00px;width:550.00px;height:1.00px;background:#8cafaf;"></div>
<div style="left:123.00px;top:271.00px;width:550.00px;height:1.00px;background:#8cafaf;"></div>
<div style="left:123.00px;top:308.00px;width:550.00px;height:1.00px;background:#8cafaf;"></div>
<div style="left:123.00px;top:261.00px;width:1.00px;height:48.00px;background:#8cafaf;"></div>
<div style="left:534.00px;top:261.00px;width:1.00px;height:48.00px;background:#8cafaf;"></div>
<div style="left:672.00px;top:261.00px;width:1.00px;height:48.00px;background:#8cafaf;"></div>
<span class="t" style="left:124.10px;top:263px;font-size:6.1px;line-height:7px;height:7px;color:#2f4f4f;font-weight:bold;transform:scaleX(0.8905);">Justificativa</span>
<span class="t" style="left:535.50px;top:263px;font-size:6.1px;line-height:7px;height:7px;color:#2f4f4f;transform:scaleX(0.8810);">DANFE por Eventos da NFe</span>
<div style="left:537.00px;top:280.00px;width:64.00px;height:13.00px;background:#cbe5e5;"></div>
<div style="left:537.00px;top:293.00px;width:64.00px;height:11.00px;background:#ffffff;"></div>
<div style="left:592.00px;top:293.00px;width:8.00px;height:10.00px;background:#e4e4e4;"></div>
<div style="left:591.00px;top:293.00px;width:1.00px;height:10.00px;background:#cfcfcf;"></div>
<svg class="a" style="left:593.40px;top:295.80px" width="5" height="3.4" viewBox="0 0 5 3.4"><path d="M0.6 0.6 L2.5 2.6 L4.4 0.6" fill="none" stroke="#444" stroke-width="0.85"/></svg>
<div style="left:537.00px;top:292.00px;width:64.00px;height:1.00px;background:#8cafaf;"></div>
<div style="left:537.00px;top:280.00px;width:64.00px;height:1.00px;background:#8cafaf;"></div>
<div style="left:537.00px;top:303.00px;width:64.00px;height:1.00px;background:#8cafaf;"></div>
<div style="left:537.00px;top:280.00px;width:1.00px;height:24.00px;background:#8cafaf;"></div>
<div style="left:600.00px;top:280.00px;width:1.00px;height:24.00px;background:#8cafaf;"></div>
<span class="t" style="left:538.40px;top:281px;font-size:6.2px;line-height:7px;height:7px;color:#2f4f4f;font-weight:bold;transform:scaleX(0.8243);">Tipo da DANFE</span>
<span class="t" style="left:604.60px;top:296px;font-size:5.4px;line-height:6px;height:6px;color:#4f8fd6;transform:scaleX(1.0467);">Visualizar</span>
<span class="t" style="left:634.00px;top:296px;font-size:5.4px;line-height:6px;height:6px;color:#4f8fd6;transform:scaleX(1.1284);">Imprimir</span>
<div style="left:112.80px;top:327.60px;width:574.60px;height:0.80px;background:#c9d6d6;"></div>
<div style="left:207.00px;top:328.00px;width:0.80px;height:31.00px;background:#9fb6b6;"></div>
<div style="left:269.20px;top:328.00px;width:0.80px;height:31.00px;background:#9fb6b6;"></div>
<div style="left:351.90px;top:328.00px;width:0.80px;height:31.00px;background:#9fb6b6;"></div>
<div style="left:435.10px;top:328.00px;width:0.80px;height:31.00px;background:#9fb6b6;"></div>
<div style="left:584.20px;top:328.00px;width:0.80px;height:31.00px;background:#9fb6b6;"></div>
<span class="t" style="left:114.40px;top:330px;font-size:4.6px;line-height:5px;height:5px;color:#555;transform:scaleX(1.1467);">Outras Operações</span>
<span class="t" style="left:208.80px;top:330px;font-size:4.6px;line-height:5px;height:5px;color:#555;transform:scaleX(1.1073);">Gerar última DANFE</span>
<span class="t" style="left:272.60px;top:330px;font-size:4.6px;line-height:5px;height:5px;color:#555;transform:scaleX(1.1168);">Enviar DANFE</span>
<span class="t" style="left:355.50px;top:330px;font-size:4.6px;line-height:5px;height:5px;color:#555;transform:scaleX(1.1455);">Documentos NFe</span>
<span class="t" style="left:437.00px;top:330px;font-size:4.6px;line-height:5px;height:5px;color:#555;transform:scaleX(1.1369);">Eventos da NFe</span>
<span class="t" style="left:650.50px;top:330px;font-size:4.6px;line-height:5px;height:5px;color:#555;transform:scaleX(1.1238);">Comandos</span>
<span class="t" style="left:117.60px;top:345px;font-size:6.6px;line-height:7px;height:7px;color:#333;transform:scaleX(0.9897);"><u>E</u>xcluir</span>
<span class="t" style="left:145.60px;top:345px;font-size:6.6px;line-height:7px;height:7px;color:#333;transform:scaleX(1.0079);">Dup<u>l</u>icar</span>
<span class="t" style="left:180.60px;top:345px;font-size:6.6px;line-height:7px;height:7px;color:#333;transform:scaleX(1.0092);">E<u>d</u>itar</span>
<span class="t" style="left:226.60px;top:345px;font-size:6.6px;line-height:7px;height:7px;color:#333;transform:scaleX(1.0447);"><u>D</u>anfe</span>
<span class="t" style="left:276.00px;top:345px;font-size:6.6px;line-height:7px;height:7px;color:#333;transform:scaleX(1.0354);">via <u>E</u>-mail</span>
<span class="t" style="left:359.60px;top:345px;font-size:6.6px;line-height:7px;height:7px;color:#333;transform:scaleX(1.0314);">Enviar Documentos</span>
<span class="t" style="left:440.00px;top:345px;font-size:6.6px;line-height:7px;height:7px;color:#333;transform:scaleX(1.0113);">De<u>v</u>olver NFe</span>
<span class="t" style="left:487.00px;top:345px;font-size:6.6px;line-height:7px;height:7px;color:#333;transform:scaleX(1.0306);">Carta C<u>o</u>rreção</span>
<span class="t" style="left:540.30px;top:345px;font-size:6.6px;line-height:7px;height:7px;color:#333;transform:scaleX(1.0108);"><u>C</u>ancelar</span>
<span class="t" style="left:613.80px;top:345px;font-size:6.6px;line-height:7px;height:7px;color:#3f8a35;transform:scaleX(0.9728);"><u>S</u>alvar</span>
<div style="left:643.30px;top:342.00px;width:33.30px;height:12.80px;border:1px dotted #ecc0c0;box-sizing:border-box;"></div>
<span class="t" style="left:649.20px;top:345px;font-size:6.6px;line-height:7px;height:7px;color:#d8343a;transform:scaleX(0.9882);"><u>F</u>echar</span>
</div></body></html>
